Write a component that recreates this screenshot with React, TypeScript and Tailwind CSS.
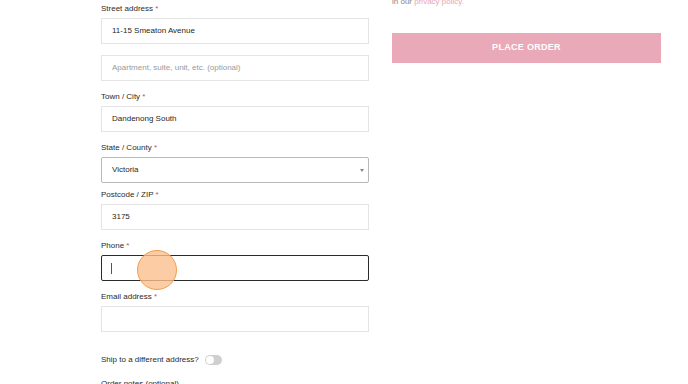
import * as React from "react";

interface FieldProps {
  label: string;
  required?: boolean;
  className?: string;
  children: React.ReactNode;
}

function Field({ label, required = true, className = "", children }: FieldProps) {
  return (
    <div className={className}>
      <label className="block text-[8px] leading-[12px] text-[#2a2a2a]">
        {label}
        {required && <span className="text-[#b5566a]"> *</span>}
      </label>
      <div className="mt-[3px]">{children}</div>
    </div>
  );
}

function TextInput({ value, placeholder }: { value?: string; placeholder?: string }) {
  return (
    <div className="flex h-[26px] items-center border border-[#e4e4e4] bg-white px-[10px] text-[8px]">
      {value ? (
        <span className="text-[#1f1f1f]">{value}</span>
      ) : (
        <span className="text-[#9a9a9a]">{placeholder}</span>
      )}
    </div>
  );
}

export default function App() {
  return (
    <div className="relative h-[384px] w-[688px] overflow-hidden bg-white font-['Liberation_Sans',Arial,sans-serif]">
      <div className="flex gap-[23px] pl-[101px] pt-[3px]">
        {/* billing form */}
        <div className="w-[268px]">
          <Field label="Street address">
            <TextInput value="11-15 Smeaton Avenue" />
            <div className="mt-[11px]">
              <TextInput placeholder="Apartment, suite, unit, etc. (optional)" />
            </div>
          </Field>

          <Field label="Town / City" className="mt-[10px]">
            <TextInput value="Dandenong South" />
          </Field>

          <Field label="State / County" className="mt-[10px]">
            <div className="flex h-[26px] items-center justify-between rounded-[2px] border border-[#b9b9b9] bg-white px-[10px] text-[8px] text-[#1f1f1f]">
              <span>Victoria</span>
              <svg width="4" height="3" viewBox="0 0 4 3" className="mr-[-6px]">
                <path d="M0 0 L4 0 L2 3 Z" fill="#888" />
              </svg>
            </div>
          </Field>

          <Field label="Postcode / ZIP" className="mt-[6px]">
            <TextInput value="3175" />
          </Field>

          <Field label="Phone" className="mt-[10px]">
            <div className="flex h-[26px] items-center rounded-[2px] border-[1.5px] border-[#2b2b2b] bg-white px-[9px]">
              <span className="h-[11px] w-px bg-[#555]" />
            </div>
          </Field>

          <Field label="Email address" className="mt-[10px]">
            <TextInput />
          </Field>

          <div className="mt-[22px] flex items-center gap-[6px] text-[8px] leading-[12px] text-[#2a2a2a]">
            <span>Ship to a different address?</span>
            <span className="flex h-[10px] w-[17px] items-center rounded-full bg-[#cfcfcf] px-[1px]">
              <span className="h-[8px] w-[8px] rounded-full bg-white" />
            </span>
          </div>

          <div className="mt-[12px] text-[8px] leading-[12px] text-[#2a2a2a]">
            Order notes (optional)
          </div>
        </div>

        {/* order summary */}
        <div className="w-[269px]">
          <p className="mt-[-7px] text-[8px] leading-[12px] text-[#888]">
            in our <span className="text-[#e8a6b5]">privacy policy.</span>
          </p>
          <button className="mt-[25px] flex h-[30px] w-full items-center justify-center bg-[#eaa9b8] text-[9px] font-bold tracking-[0.3px] text-white">
            PLACE ORDER
          </button>
        </div>
      </div>

      {/* click indicator */}
      <div className="absolute left-[137px] top-[250px] h-[40px] w-[40px] rounded-full border border-[#f39c4e] bg-[#fbbf8f]/80" />
    </div>
  );
}
